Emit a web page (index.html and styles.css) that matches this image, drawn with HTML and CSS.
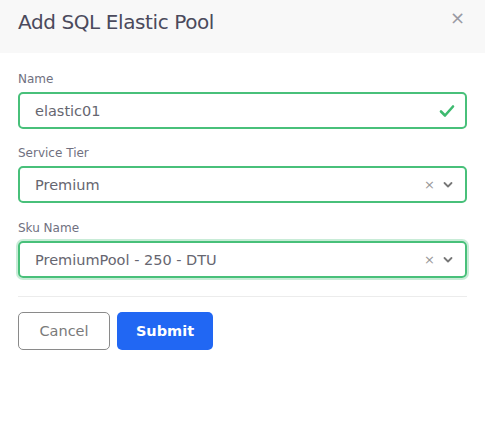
FILE: index.html
```html
<!DOCTYPE html>
<html>
<head>
<meta charset="utf-8">
<link rel="stylesheet" href="styles.css">
</head>
<body>
<div class="modal">
  <div class="header">
    <h1 class="title">Add SQL Elastic Pool</h1>
    <span class="close">&times;</span>
  </div>
  <div class="body">
    <div class="group">
      <label class="label">Name</label>
      <div class="field">
        <span class="value">elastic01</span>
        <svg class="check" width="16" height="14" viewBox="0 0 16 14"><path d="M2 7.5 L6 11.5 L14 2.5" fill="none" stroke="#3dba6f" stroke-width="2.6" stroke-linecap="round" stroke-linejoin="round"/></svg>
      </div>
    </div>
    <div class="group">
      <label class="label">Service Tier</label>
      <div class="field">
        <span class="value">Premium</span>
        <span class="controls"><span class="clear">&times;</span><svg class="chev" width="10" height="8" viewBox="0 0 10 8"><path d="M1.5 2 L5 5.5 L8.5 2" fill="none" stroke="#777" stroke-width="1.8" stroke-linecap="round" stroke-linejoin="round"/></svg></span>
      </div>
    </div>
    <div class="group group-last">
      <label class="label">Sku Name</label>
      <div class="field focused">
        <span class="value">PremiumPool - 250 - DTU</span>
        <span class="controls"><span class="clear">&times;</span><svg class="chev" width="10" height="8" viewBox="0 0 10 8"><path d="M1.5 2 L5 5.5 L8.5 2" fill="none" stroke="#777" stroke-width="1.8" stroke-linecap="round" stroke-linejoin="round"/></svg></span>
      </div>
    </div>
    <div class="divider"></div>
    <div class="actions">
      <button class="btn cancel">Cancel</button>
      <button class="btn submit">Submit</button>
    </div>
  </div>
</div>
</body>
</html>
```

FILE: styles.css
```css
html, body {
  margin: 0;
  padding: 0;
  background: #ffffff;
}
body {
  font-family: "DejaVu Sans", "Open Sans", sans-serif;
  width: 485px;
  height: 443px;
}
.header {
  height: 53px;
  background: #f8f8f8;
  display: flex;
  align-items: flex-start;
  justify-content: space-between;
  padding: 0 20px 0 18px;
  box-sizing: border-box;
}
.title {
  margin: 9px 0 0 0;
  font-size: 20px;
  font-weight: 400;
  color: #4b4a5c;
  line-height: 26px;
  letter-spacing: -0.4px;
}
.close {
  margin-top: 8px;
  font-size: 18px;
  color: #9a9aa4;
  line-height: 20px;
}
.body {
  padding: 18px 18px 0 18px;
}
.group {
  display: flex;
  flex-direction: column;
  margin-bottom: 16px;
}
.group-last {
  padding-top: 1px;
  margin-bottom: 0;
}
.label {
  font-size: 12px;
  line-height: 16px;
  color: #707080;
  margin-bottom: 5px;
}
.field {
  height: 37px;
  box-sizing: border-box;
  border: 2px solid #48c07a;
  border-radius: 5px;
  display: flex;
  align-items: center;
  justify-content: space-between;
  padding: 0 12px 0 15px;
}
.field.focused {
  box-shadow: 0 0 0 2px rgba(72, 192, 122, 0.3);
}
.value {
  font-size: 14.5px;
  color: #666670;
}
.controls {
  display: flex;
  align-items: center;
  gap: 8px;
}
.clear {
  font-size: 13px;
  color: #999;
  line-height: 1;
}
.chev {
  display: block;
}
.check {
  display: block;
  margin-right: -2px;
}
.divider {
  height: 1px;
  background: #ececec;
  margin: 18px 0 15px 0;
}
.actions {
  display: flex;
  gap: 7px;
}
.btn {
  height: 38px;
  border-radius: 5px;
  font-family: "DejaVu Sans", "Open Sans", sans-serif;
  font-size: 14.5px;
  cursor: pointer;
}
.cancel {
  width: 92px;
  background: #fff;
  border: 1px solid #8a8a8a;
  color: #7a7a7a;
}
.submit {
  width: 96px;
  background: #2167f3;
  border: none;
  color: #fff;
  font-weight: 700;
}
```
